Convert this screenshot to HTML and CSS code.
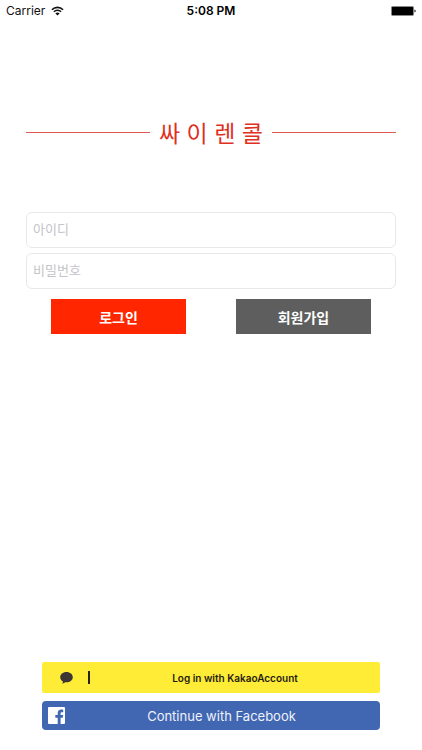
FILE: index.html
```html
<!DOCTYPE html>
<html lang="ko">
<head>
<meta charset="utf-8">
<meta name="viewport" content="width=device-width, initial-scale=1">
<title>싸이렌콜</title>
<link rel="stylesheet" href="styles.css">
</head>
<body>
<div class="screen">
  <header class="status">
    <div class="status-carrier">
      <span>Carrier</span>
      <svg class="wifi" viewBox="0 0 13 10" aria-hidden="true">
        <path d="M0.9 3.7a8 8 0 0 1 11.2 0M2.9 5.8a5.1 5.1 0 0 1 7.2 0" fill="none" stroke="currentColor" stroke-width="1.6"/>
        <path d="M6.5 9.6 4.4 7.5a3 3 0 0 1 4.2 0z" fill="currentColor"/>
      </svg>
    </div>
    <span class="status-time">5:08 PM</span>
    <svg class="battery" viewBox="0 0 25 10" aria-hidden="true">
      <rect x="0.2" y="0.2" width="22.6" height="9.6" rx="1.2" fill="#666"/>
      <rect x="1" y="1" width="21" height="8" rx="0.5" fill="#000"/>
      <path d="M23.5 3.4a1.7 1.7 0 0 1 0 3.2z" fill="#000"/>
    </svg>
  </header>
  <main class="content">
    <h1 class="brand">싸 이 렌 콜</h1>
    <form class="login">
      <input class="field" type="text" placeholder="아이디" aria-label="아이디">
      <input class="field" type="password" placeholder="비밀번호" aria-label="비밀번호">
      <div class="actions">
        <button class="action action-login" type="submit">로그인</button>
        <button class="action action-join" type="button">회원가입</button>
      </div>
    </form>
  </main>
  <footer class="social">
    <button class="social-button kakao" type="button">
      <span class="kakao-mark">
        <svg class="kakao-icon" viewBox="0 0 13 12" aria-hidden="true">
          <path d="M6.5 0C2.9 0 0.2 2.3 0.2 5.2c0 1.9 1.1 3.5 2.8 4.4L2.4 11.8 5.4 10.2c4.2 0.5 7.4-1.9 7.4-5C12.8 2.3 10.1 0 6.5 0z" fill="#3b3535"/>
        </svg>
      </span>
      <span class="social-label">Log in with KakaoAccount</span>
    </button>
    <button class="social-button facebook" type="button">
      <svg class="facebook-icon" viewBox="0 0 17 17" aria-hidden="true">
        <path d="M1 0h15a1 1 0 0 1 1 1v15a1 1 0 0 1-1 1h-3.4v-6.3h2.2l0.4-2.7h-2.6V6.4c0-0.8 0.3-1.2 1.2-1.2h1.4V2.7c-0.5-0.1-1.1-0.1-1.9-0.1-2.3 0-3.6 1.3-3.6 3.5V8H7.3v2.7h2.4V17H1a1 1 0 0 1-1-1V1a1 1 0 0 1 1-1z" fill="#fff"/>
      </svg>
      <span class="social-label">Continue with Facebook</span>
    </button>
  </footer>
</div>
</body>
</html>
```
FILE: styles.css
```css
* {
  box-sizing: border-box;
}

body {
  margin: 0;
  background: #fff;
  color: #111;
  font-family: Inter, "Noto Sans CJK KR", sans-serif;
}

button,
input {
  font: inherit;
}

button {
  padding: 0;
  border: 0;
}

.screen {
  display: flex;
  flex-direction: column;
  min-height: 100vh;
}

.status {
  display: grid;
  grid-template-columns: 1fr auto 1fr;
  align-items: center;
  height: 22px;
  padding: 0 6px;
  font-size: 12px;
  line-height: 16px;
}

.status-carrier {
  display: flex;
  align-items: center;
  gap: 6px;
}

.wifi {
  width: 13px;
  height: 10px;
}

.status-time {
  color: #000;
  font-weight: 600;
}

.battery {
  justify-self: end;
  width: 25px;
  height: 10px;
}

.content {
  flex: 1;
  padding: 92px 26px 0;
}

.brand {
  display: flex;
  align-items: center;
  gap: 9px;
  margin: 0 0 62px;
  color: #e0301e;
  font-family: "Noto Sans CJK KR", sans-serif;
  font-size: 23px;
  font-weight: 400;
  line-height: 36px;
}

.brand::before,
.brand::after {
  content: "";
  flex: 1;
  height: 1px;
  background: #dc5a50;
}

.login {
  display: flex;
  flex-direction: column;
  gap: 5px;
}

.field {
  width: 100%;
  height: 36px;
  padding: 0 6px 2px;
  border: 1px solid #e8e8e8;
  border-radius: 6px;
  background: #fff;
  font-size: 13px;
}

.field::placeholder {
  color: #c4c4c9;
  opacity: 1;
}

.actions {
  display: grid;
  grid-template-columns: 1fr 1fr;
  justify-items: center;
  margin-top: 5px;
}

.action {
  width: 73%;
  height: 35px;
  color: #fff;
  font-size: 14px;
  font-weight: 700;
}

.action-login {
  background: #ff2600;
}

.action-join {
  background: #5e5e5e;
}

.social {
  display: flex;
  flex-direction: column;
  gap: 8px;
  padding: 0 10% 20px;
}

.social-button {
  display: flex;
  align-items: center;
}

.social-label {
  flex: 1;
  text-align: center;
}

.kakao {
  height: 31px;
  border-radius: 2px;
  background: #ffec36;
  color: #1e1b10;
  font-size: 10px;
  font-weight: 600;
}

.kakao-mark {
  display: flex;
  align-items: center;
  width: 48px;
  height: 13px;
  padding-left: 18px;
  border-right: 2px solid #26220f;
}

.kakao-icon {
  width: 13px;
  height: 12px;
}

.facebook {
  height: 29px;
  padding: 0 2px 0 6px;
  border-radius: 4px;
  background: #4267b2;
  color: #eef2fb;
  font-size: 13px;
}

.facebook-icon {
  width: 17px;
  height: 17px;
}
```
